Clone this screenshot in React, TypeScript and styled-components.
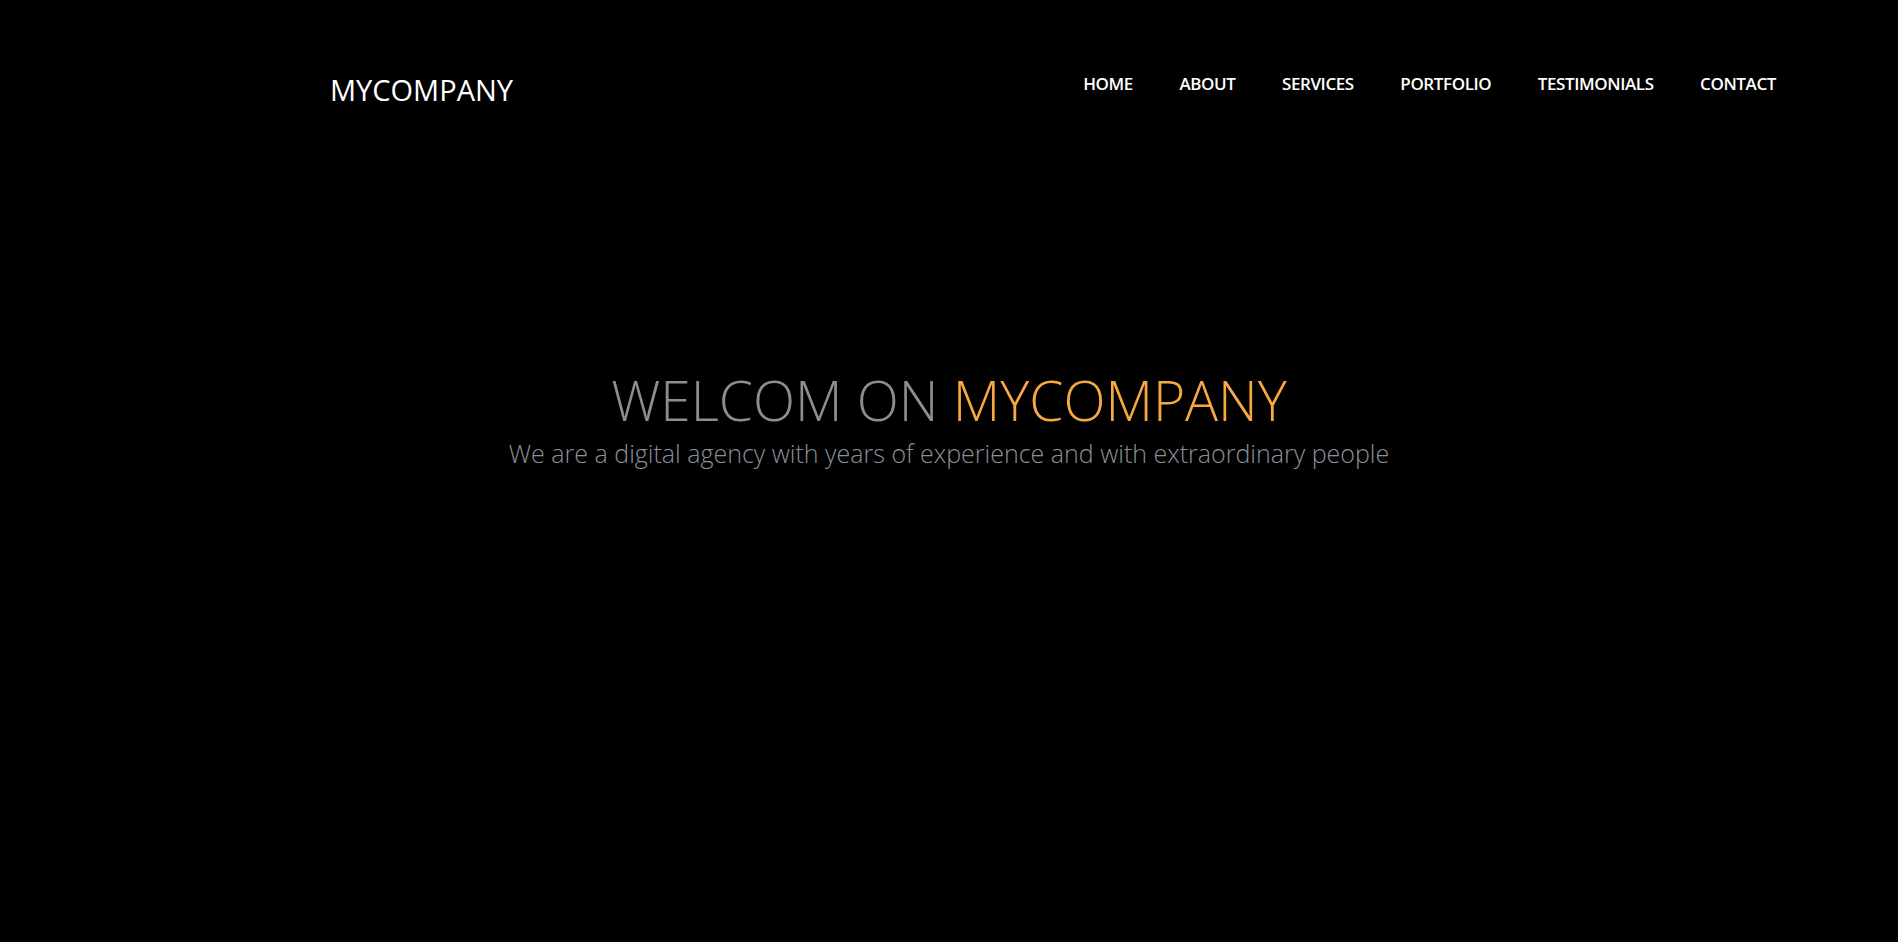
import React from "react";
import styled, { createGlobalStyle } from "styled-components";

const Global = createGlobalStyle`
  html, body { margin: 0; padding: 0; background: #000; }
  body { font-family: "Open Sans", "Liberation Sans", sans-serif; }
  * { box-sizing: border-box; }
`;

const Page = styled.div`
  min-height: 942px;
  background: #000;
  display: flex;
  flex-direction: column;
`;

const Header = styled.header`
  display: flex;
  justify-content: space-between;
  align-items: flex-start;
  padding: 70px 122px 0 330px;
`;

const Logo = styled.a`
  font-size: 29px;
  font-weight: 400;
  color: #fff;
  text-decoration: none;
  line-height: 40px;
`;

const Nav = styled.nav`
  display: flex;
  gap: 46.5px;
`;

const NavLink = styled.a`
  font-size: 17px;
  font-weight: 600;
  color: #fff;
  text-decoration: none;
  line-height: 28px;
  letter-spacing: -0.4px;
`;

const Hero = styled.section`
  display: flex;
  flex-direction: column;
  align-items: center;
  padding-top: 258px;
`;

const Title = styled.h1`
  margin: 0;
  font-size: 55px;
  font-weight: 300;
  line-height: 64px;
  color: #8e8e8e;
`;

const Accent = styled.span`
  color: #f8a840;
`;

const Subtitle = styled.p`
  margin: 5px 0 0;
  font-size: 25px;
  font-weight: 300;
  line-height: 32px;
  color: #8a9098;
`;

export default function App() {
  const links = ["HOME", "ABOUT", "SERVICES", "PORTFOLIO", "TESTIMONIALS", "CONTACT"];
  return (
    <Page>
      <Global />
      <Header>
        <Logo href="#">MYCOMPANY</Logo>
        <Nav>
          {links.map((l) => (
            <NavLink key={l} href="#">{l}</NavLink>
          ))}
        </Nav>
      </Header>
      <Hero>
        <Title>
          WELCOM ON <Accent>MYCOMPANY</Accent>
        </Title>
        <Subtitle>We are a digital agency with years of experience and with extraordinary people</Subtitle>
      </Hero>
    </Page>
  );
}
